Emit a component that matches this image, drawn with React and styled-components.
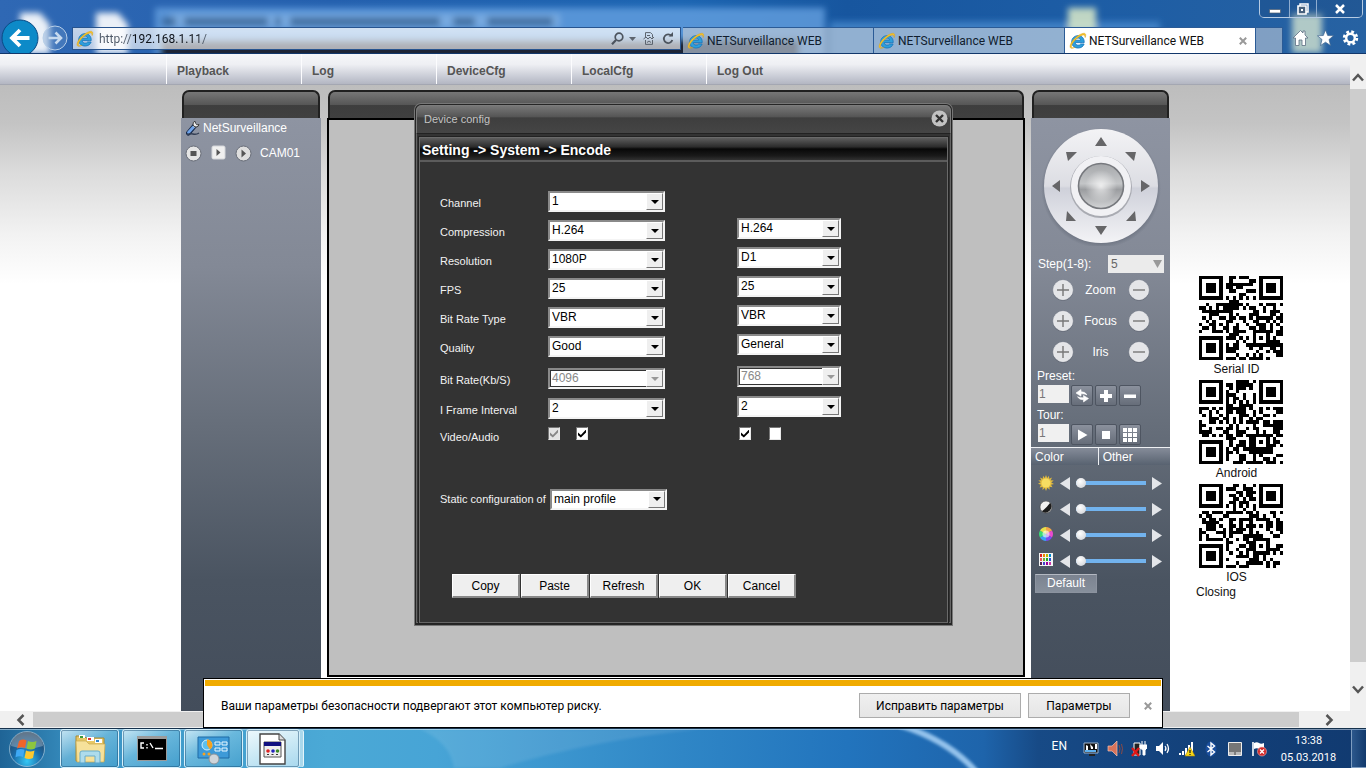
import React, { useState } from "react";
import styled, { createGlobalStyle, css } from "styled-components";

const GlobalStyle = createGlobalStyle`
  * { box-sizing: border-box; }
  html, body { margin: 0; height: 100%; overflow: hidden; }
  body { font-family: "Liberation Sans", Arial, sans-serif; font-size: 12px; background: #fff; }
  #root { height: 100%; }
  button, input, select { font-family: inherit; margin: 0; }
  svg { display: block; flex: none; }
`;

const UI_FONT = 'Roboto, "Open Sans", sans-serif';

const Screen = styled.div`
  position: relative;
  height: 100vh;
  display: flex;
  flex-direction: column;
`;

/* ---------- browser frame ---------- */

const Chrome = styled.header`
  position: relative;
  height: 54px;
  flex: none;
  overflow: hidden;
  background: linear-gradient(90deg, #2f68b4 0, #2460ae 24%, #1c65b2 50%, #17569f 62%, #1d5da5 80%, #2762a2 100%);
  border-bottom: 1px solid #12376b;
  font-family: ${UI_FONT};
`;

const Glass = styled.svg`
  position: absolute;
  inset: 0;
  width: 100%;
  height: 100%;
`;

const Caption = styled.div`
  position: absolute;
  top: 0;
  right: 3px;
  display: flex;
  height: 18px;
  border: 1px solid #b6cbe3;
  border-top: 0;
  border-radius: 0 0 5px 5px;
`;

const CaptionButton = styled.button`
  width: ${(p) => p.$w}px;
  padding: 0;
  display: grid;
  place-items: center;
  border: 0;
  border-left: ${(p) => (p.$first ? "0" : "1px solid #8fadd0")};
  background: rgba(20, 60, 110, 0.25);
`;

const ChromeRow = styled.div`
  position: relative;
  display: flex;
  align-items: flex-start;
  padding-top: 19px;
  height: 54px;
`;

const NavRound = styled.button`
  width: ${(p) => p.$size}px;
  height: ${(p) => p.$size}px;
  flex: none;
  padding: 0;
  border: 0;
  background: none;
  margin: ${(p) => p.$m};
`;

const AddressBar = styled.div`
  flex: 1;
  height: 23px;
  margin: 8px 2px 0 4px;
  padding: 0 6px 0 3px;
  display: flex;
  align-items: center;
  gap: 5px;
  border: 1px solid #27548f;
  background: linear-gradient(180deg, rgba(255, 255, 255, 0.72), rgba(255, 255, 255, 0.64));
  min-width: 0;
`;

const AddressInput = styled.input`
  flex: 1;
  min-width: 0;
  height: 20px;
  border: 0;
  padding: 0;
  outline: 0;
  font-size: 12px;
  color: transparent;
  background: linear-gradient(90deg, #4f5a68 34px, #0c1118 34px, #0c1118 100px, #4f5a68 100px);
  background-clip: text;
`;

const ToolButton = styled.button`
  padding: 0;
  border: 0;
  background: none;
`;

const Tabs = styled.div`
  display: flex;
  height: 26px;
  margin-top: 8px;
`;

const Tab = styled.button`
  width: 191px;
  height: 26px;
  padding: 0 8px 0 4px;
  display: flex;
  align-items: center;
  gap: 2px;
  border: 1px solid #2b5b96;
  border-width: 1px 1px 0 0;
  background: ${(p) => (p.$active ? "#fff" : "rgba(190, 202, 216, 0.66)")};
  color: ${(p) => (p.$active ? "#101010" : "#101d2e")};
  font-family: inherit;
  font-size: 12px;
  text-align: left;
  white-space: nowrap;
`;

const TabTitle = styled.span`
  flex: 1;
`;

const NewTab = styled.button`
  width: 27px;
  height: 26px;
  border: 1px solid #2b5b96;
  border-width: 1px 1px 0 0;
  background: rgba(190, 202, 216, 0.6);
`;

const ChromeTools = styled.div`
  display: flex;
  gap: 8px;
  margin: 10px 7px 0 9px;
`;

const Viewport = styled.div`
  flex: 1;
  min-height: 0;
  display: grid;
  grid-template-columns: minmax(0, 1fr) 16px;
  grid-template-rows: minmax(0, 1fr) 17px;
`;

const ScrollTrack = styled.div`
  display: flex;
  flex-direction: ${(p) => (p.$vertical ? "column" : "row")};
  align-items: center;
  background: #f0f0f0;
  ${(p) =>
    p.$vertical
      ? css`
          grid-row: 1;
          grid-column: 2;
          padding: 18px 0 16px;
          justify-content: space-between;
        `
      : css`
          grid-row: 2;
          grid-column: 1 / 3;
          padding: 0 31px 0 15px;
          gap: 6px;
        `}
`;

const ScrollThumb = styled.div`
  flex: 1;
  background: #cdcdcd;
  ${(p) => (p.$vertical ? "width: 16px; margin: 6px 0 22px;" : "height: 15px; margin-right: 18px;")}
`;

const ScrollButton = styled.button`
  padding: 0;
  border: 0;
  background: none;
`;

/* ---------- web page ---------- */

const Page = styled.div`
  min-width: 0;
  display: flex;
  flex-direction: column;
  background: linear-gradient(180deg, #bdbdbd 30px, #c4c4c4 70px, #dcdcdc 120px, #f2f2f2 180px, #ffffff 230px);
`;

const MenuBar = styled.nav`
  height: 31px;
  flex: none;
  display: flex;
  padding-left: 166px;
  background: linear-gradient(180deg, #f6f7fa 0, #eeeff3 35%, #c9ccd6 75%, #b3b6c2 100%);
  border-bottom: 1px solid #a4a7b2;
`;

const MenuItem = styled.a`
  width: 135px;
  padding-left: 10px;
  line-height: 34px;
  height: 30px;
  border-left: 1px solid #fcfcfe;
  color: #555;
  font-weight: bold;
  text-decoration: none;
`;

const Columns = styled.main`
  flex: 1;
  min-height: 0;
  display: flex;
  gap: 6px;
  padding: 5px 0 0 181px;
`;

const Column = styled.section`
  position: relative;
  display: flex;
  flex-direction: column;
  ${(p) => (p.$w ? `width: ${p.$w}px; flex: none;` : "flex: 1; min-width: 0;")}
`;

const PanelCap = styled.div`
  height: 28px;
  flex: none;
  margin: 0 1px;
  border: 2px solid #202020;
  border-bottom: 0;
  border-radius: 7px 7px 0 0;
  background: linear-gradient(180deg, #777 0, #555 50%, #3d3d3d 52%, #404040 100%);
`;

const PanelBody = styled.div`
  flex: 1;
  min-height: 0;
  background: linear-gradient(180deg, #8e94a2 0, #838996 25%, #666e7a 52%, #4a5461 78%, #434d5b 100%);
  color: #fff;
`;

const VideoArea = styled.div`
  flex: 1;
  margin-bottom: 34px;
  background: #bfbfbf;
  border: 2px solid #000;
`;

const TreeRow = styled.div`
  display: flex;
  align-items: center;
  height: ${(p) => p.$h}px;
  padding-left: ${(p) => p.$left}px;
  gap: ${(p) => p.$gap}px;
`;

const IconButton = styled.button`
  padding: 0;
  border: 0;
  background: none;
`;

const DeviceName = styled.span`
  white-space: nowrap;
`;

/* ---------- PTZ panel ---------- */

const WheelBox = styled.div`
  display: flex;
  justify-content: center;
  padding-top: 8px;
`;

const StepRow = styled.div`
  display: flex;
  align-items: center;
  justify-content: space-between;
  height: 20px;
  margin-top: 8px;
  padding: 0 6px 0 7px;
`;

const StackSelect = styled.span`
  display: grid;
  align-items: center;
  > * { grid-area: 1 / 1; }
  > svg { justify-self: end; margin-right: 2px; pointer-events: none; }
`;

const StepSelect = styled.select`
  appearance: none;
  width: 56px;
  height: 18px;
  border: 0;
  border-radius: 0;
  padding: 0 3px;
  background: #ebebeb;
  color: #666;
  font-size: 12px;
`;

const LensRow = styled.div`
  display: grid;
  grid-template-columns: 22px 54px 22px;
  justify-content: center;
  align-items: center;
  text-align: center;
  height: 31px;
`;

const FieldLabel = styled.label`
  display: block;
  line-height: 18px;
  padding-left: 6px;
`;

const FieldRow = styled.div`
  display: flex;
  align-items: flex-start;
  gap: 2px;
  height: 21px;
  padding-left: 7px;
`;

const NumberBox = styled.input`
  width: 31px;
  height: 18px;
  padding: 0 1px;
  border: 0;
  background: #f0f0f0;
  color: #777;
  font-size: 12px;
`;

const SquareButton = styled.button`
  width: 22px;
  height: 21px;
  padding: 0;
  display: grid;
  place-items: center;
  border: 1px solid #4e5561;
  border-radius: 2px;
  background: linear-gradient(180deg, #8b919d, #666d79);
`;

const PictureTabs = styled.div`
  display: flex;
  margin-top: 2px;
  height: 18px;
`;

const PictureTab = styled.button`
  flex: ${(p) => p.$grow};
  padding: 0 0 0 4px;
  border: 0;
  border-top: 1px solid #eef0f3;
  border-left: ${(p) => (p.$divided ? "1px solid #eef0f3" : "0")};
  background: linear-gradient(180deg, #858c99, #586270);
  color: #fff;
  font-size: 12px;
  text-align: left;
`;

const Sliders = styled.div`
  padding: 5px 7px 0 7px;
`;

const SliderRow = styled.div`
  height: 26px;
  display: grid;
  grid-template-columns: 16px 10px 70px 10px;
  column-gap: 6px;
  align-items: center;
`;

const Range = styled.input`
  appearance: none;
  width: 70px;
  height: 12px;
  background: transparent;
  &::-webkit-slider-runnable-track { height: 4px; background: #72b3ee; }
  &::-webkit-slider-thumb {
    appearance: none;
    width: 10px;
    height: 10px;
    margin-top: -3px;
    border-radius: 50%;
    background: radial-gradient(circle at 40% 35%, #fff, #c9ccd2);
  }
`;

const DefaultButton = styled.button`
  width: 62px;
  height: 19px;
  margin-left: 4px;
  padding: 0;
  border: 1px solid #8c939f;
  border-top-color: #b4b9c2;
  background: linear-gradient(180deg, #7b8390, #87909c);
  color: #fff;
  font-size: 12px;
  line-height: 15px;
`;

const QrColumn = styled.aside`
  width: 154px;
  flex: none;
  margin-left: 20px;
  padding-top: 186px;
  color: #111;
`;

const QrFigure = styled.figure`
  width: 88px;
  margin: 0 0 2px;
  padding-left: 3px;
  &:last-of-type { margin-bottom: 0; }
`;

const QrCaption = styled.figcaption`
  width: 75px;
  text-align: center;
  line-height: 19px;
  height: 18px;
`;

const Closing = styled.p`
  margin: 0;
  line-height: 12px;
`;

/* ---------- device config dialog ---------- */

const Dialog = styled.section`
  position: absolute;
  top: 14px;
  left: 88px;
  right: 73px;
  background: #333;
  border: 2px solid #262626;
  border-width: 1px 1px 2px 1px;
  border-radius: 6px 6px 0 0;
  box-shadow: inset 0 0 0 1px #666, 0 0 0 1px #777;
  font-size: 11px;
  color: #f2f2f2;
`;

const DialogHeader = styled.div`
  height: 29px;
  padding: 0 2px 2px 7px;
  display: flex;
  align-items: center;
  justify-content: space-between;
  border-radius: 6px 6px 0 0;
  border: 1px solid #7c7c7c;
  border-bottom-color: #222;
  background: linear-gradient(180deg, #777 0, #555 40%, #3e3e3e 44%, #454545 100%);
  color: #c4c4c4;
`;

const DialogFrame = styled.div`
  margin: 3px 3px 0;
  border: 1px solid #6a6a6a;
  border-bottom: 0;
  outline: 1px solid #222;
  padding-bottom: 25px;
`;

const Breadcrumb = styled.h1`
  margin: 0;
  height: 24px;
  padding-left: 2px;
  font-size: 14px;
  line-height: 24px;
  font-weight: bold;
  color: #fff;
  background: linear-gradient(180deg, #5d5d5d 0, #2c2c2c 40%, #080808 50%, #191919 80%, #303030 100%);
  border-bottom: 2px solid #5c5c5c;
`;

const FormGrid = styled.div`
  display: grid;
  grid-template-columns: 108px 189px 105px;
  grid-template-rows: repeat(5, 29px) 32px 30px 27px 29px;
  padding: 27px 0 0 20px;
`;

const FormLabel = styled.label`
  padding-top: 7px;
  line-height: 15px;
  white-space: nowrap;
`;

const Cell = styled.div`
  padding-top: ${(p) => (p.$main ? 2 : 0)}px;
`;

const Combo = styled.span`
  display: grid;
  width: ${(p) => p.$w}px;
  height: 21px;
  border: 2px solid;
  border-color: #8a8a8a #f4f4f4 #f4f4f4 #8a8a8a;
  > * { grid-area: 1 / 1; }
`;

const ComboSelect = styled.select`
  appearance: none;
  width: 100%;
  height: 17px;
  padding: 0 0 0 1px;
  border: 1px solid ${(p) => (p.disabled ? "#333" : "#fff")};
  border-radius: 0;
  background: #fff;
  color: #000;
  font-size: 12px;
  line-height: 15px;
  opacity: 1;
  &:disabled { color: #888; }
`;

const ComboArrow = styled.span`
  justify-self: end;
  width: 17px;
  height: 17px;
  display: grid;
  place-items: center;
  pointer-events: none;
  background: #efefef;
  border: 1px solid;
  border-color: #fff #777 #777 #fff;
`;

const Checks = styled.div`
  display: flex;
  gap: ${(p) => p.$gap}px;
  padding: 4px 0 0 ${(p) => p.$left || 0}px;
`;

const Check = styled.input`
  appearance: none;
  width: 12px;
  height: 13px;
  display: grid;
  place-items: center;
  background: ${(p) => (p.disabled ? "#e4e4e4" : "#fff")};
  border: 1px solid;
  border-color: #777 #e8e8e8 #e8e8e8 #777;
  &:checked::before {
    content: "";
    width: 8px;
    height: 8px;
    background: ${(p) => (p.disabled ? "#888" : "#000")};
    clip-path: polygon(0 38%, 36% 68%, 100% 0, 100% 36%, 36% 100%, 0 72%);
  }
`;

const ProfileRow = styled.div`
  display: flex;
  align-items: center;
  justify-content: flex-start;
  padding: 36px 0 0 20px;
  height: 58px;
`;

const ProfileLabel = styled.label`
  width: 110px;
  white-space: nowrap;
`;

const Actions = styled.div`
  display: flex;
  gap: 1px;
  padding: 64px 0 0 32px;
`;

const Action = styled.button`
  width: 68px;
  height: 24px;
  padding: 0;
  border: 1px solid;
  border-color: #fff #888 #888 #fff;
  border-right-width: 2px;
  border-bottom-width: 2px;
  background: #efefef;
  color: #000;
  font-size: 12px;
`;

/* ---------- security notice ---------- */

const Notice = styled.div`
  position: absolute;
  left: 203px;
  right: 203px;
  bottom: 40px;
  height: 50px;
  padding: 1px 1px 0;
  border: 1px solid #000;
  background: #fff;
  font-family: ${UI_FONT};
  color: #000;
`;

const NoticeStripe = styled.div`
  height: 6px;
  background: #f0ab00;
`;

const NoticeBody = styled.div`
  display: flex;
  align-items: center;
  height: 39px;
  padding: 0 2px 0 16px;
  gap: 7px;
`;

const NoticeText = styled.p`
  flex: 1;
  margin: 0;
  font-size: 12px;
`;

const NoticeButton = styled.button`
  width: ${(p) => p.$w}px;
  height: 25px;
  padding: 0;
  border: 1px solid #acacac;
  background: linear-gradient(180deg, #f0f0f0, #e5e5e5);
  color: #000;
  font-size: 12px;
`;

const NoticeClose = styled.button`
  width: 22px;
  padding: 0;
  border: 0;
  background: none;
  display: grid;
  place-items: center;
`;

/* ---------- taskbar ---------- */

const Taskbar = styled.footer`
  position: relative;
  height: 40px;
  flex: none;
  display: flex;
  overflow: hidden;
  border-top: 1px solid #16324d;
  background: linear-gradient(90deg, #1f6496 0, #3a93c4 6%, #4ba9d6 24%, #47a4d6 32%, #2f86c6 50%, #2274bd 62%, #1e64ab 72%, #174a86 76%, #123f78 90%, #113a70 100%);
  box-shadow: inset 0 1px 0 rgba(255, 255, 255, 0.45);
  font-family: ${UI_FONT};
`;

const StartButton = styled.button`
  width: 60px;
  padding: 0 0 0 7px;
  border: 0;
  background: none;
`;

const TaskButtons = styled.div`
  position: relative;
  display: flex;
  gap: 3px;
  flex: 1;
  height: 39px;
`;

const TaskButton = styled.button`
  width: ${(p) => p.$w || 59}px;
  padding: 0;
  display: grid;
  place-items: center;
  border: 1px solid #d6f0fb;
  border-radius: 3px;
  outline: 1px solid rgba(20, 70, 110, 0.45);
  outline-offset: -2px;
  box-shadow: ${(p) => (p.$active ? "4px 0 0 -1px #a9d8ec, 5px 0 0 -1px #e4f5fb" : "none")};
  background: ${(p) =>
    p.$active
      ? "linear-gradient(160deg, #eef9fd, #cbe9f5 50%, #a8d8ee)"
      : "linear-gradient(150deg, rgba(222,244,252,0.85), rgba(130,200,230,0.6) 45%, rgba(70,160,205,0.7))"};
`;

const Tray = styled.div`
  position: relative;
  display: flex;
  align-items: center;
  gap: 8px;
  color: #fff;
  font-size: 12px;
`;

const Lang = styled.span`
  margin: -6px 8px 0 0;
`;

const Clock = styled.div`
  width: 68px;
  padding-right: 1px;
  text-align: center;
  font-size: 11px;
  line-height: 17px;
`;

const ShowDesktop = styled.button`
  width: 15px;
  height: 39px;
  padding: 0;
  border: 1px solid #7d9cc0;
  border-right: 0;
  background: linear-gradient(90deg, #2b578c, #123a6d);
`;

/* ---------- drawings ---------- */

const IeLogo = ({ size = 18 }) => (
  <svg width={size} height={size} viewBox="0 0 18 18">
    <path d="M13.2 10.6H6.2c.2 1.700 1.400 2.600 2.900 2.600 1.200 0 2-.4 2.500-1.200h3.500c-.8 2.500-3 4-6 4C5.300 16 2.700 13.600 2.700 9.900S5.400 3.700 9.100 3.700c4 0 6.200 2.700 6.100 6.900zM6.300 8.200h5.300c-.2-1.400-1.200-2.200-2.600-2.200S6.500 6.800 6.300 8.200z" fill="#2d9fdc" stroke="#1c78bd" strokeWidth=".9" />
    <path d="M16.200 5.600c.9-2.200.7-3.800-.4-4.200-1.600-.6-5 .7-8.200 3.300C3.100 8.300.3 13 1.200 15.400c.6 1.500 2.700 1.100 5-.2-1.900.7-3.200.8-3.600 0-.8-1.600 1.600-5.600 5.300-8.700 3.200-2.700 6.300-4.100 7.300-3.400.5.400.6 1.300 1 2.500z" fill="#f5c22c" stroke="#d79c10" strokeWidth=".4" />
  </svg>
);

const BackIcon = () => (
  <svg width="38" height="38" viewBox="0 0 38 38">
    <circle cx="19" cy="19" r="18" fill="#0d8ac8" stroke="#0a4b86" />
    <path d="M28.500 19H12M19 11l-8 8 8 8" fill="none" stroke="#fff" strokeWidth="3.800" />
  </svg>
);

const ForwardIcon = () => (
  <svg width="26" height="26" viewBox="0 0 26 26">
    <circle cx="13" cy="13" r="12" fill="#6e98cc" fillOpacity=".35" stroke="#b8cfe8" />
    <path d="M6.500 13h12M13.500 7.500 19 13l-5.500 5.500" fill="none" stroke="#c6d9ee" strokeWidth="2.600" />
  </svg>
);

const Cross = ({ size = 8, color = "#999", width = 2 }) => (
  <svg width={size} height={size} viewBox="0 0 8 8">
    <path d="M.8.8l6.400 6.400M7.200.8.8 7.200" stroke={color} strokeWidth={width} />
  </svg>
);

const Triangle = ({ dir = "down", w = 8, h = 5, color = "#000" }) => {
  const d = { down: "M0 0h10L5 10z", left: "M10 0v10L0 5z", right: "M0 0v10l10-5z" }[dir];
  return (
    <svg width={w} height={h} viewBox="0 0 10 10" preserveAspectRatio="none">
      <path d={d} fill={color} />
    </svg>
  );
};

const Chevron = ({ d, w, h }) => (
  <svg width={w} height={h} viewBox={`0 0 ${w} ${h}`}>
    <path d={d} fill="none" stroke="#555" strokeWidth="2.500" />
  </svg>
);

const RoundSign = ({ plus }) => (
  <svg width="22" height="22" viewBox="0 0 22 22">
    <circle cx="11" cy="12" r="10" fill="#4f5662" opacity=".5" />
    <circle cx="11" cy="11" r="9.700" fill="#e4e5e8" stroke="#f5f5f7" strokeWidth=".6" />
    <path d={plus ? "M5 11h12M11 5v12" : "M5 11h12"} stroke="#777" strokeWidth="1.400" />
  </svg>
);

const Wheel = () => (
  <svg width="120" height="120" viewBox="0 0 120 120" role="img" aria-label="Pan and tilt">
    <defs>
      <linearGradient id="ring" x1="0" y1="0" x2="0" y2="1">
        <stop offset="0" stopColor="#f3f3f5" />
        <stop offset=".5" stopColor="#dcdde3" />
        <stop offset=".52" stopColor="#cfd1da" />
        <stop offset="1" stopColor="#f3f3f6" />
      </linearGradient>
      <linearGradient id="knob" x1="0" y1="0" x2="0" y2="1">
        <stop offset="0" stopColor="#a6a8ab" />
        <stop offset=".45" stopColor="#c3c5c7" />
        <stop offset=".58" stopColor="#9b9da0" />
        <stop offset="1" stopColor="#d3d4d6" />
      </linearGradient>
      <radialGradient id="shine">
        <stop offset="0" stopColor="#fff" stopOpacity=".75" />
        <stop offset="1" stopColor="#fff" stopOpacity="0" />
      </radialGradient>
      <radialGradient id="halo">
        <stop offset=".9" stopColor="#5b6270" stopOpacity=".6" />
        <stop offset="1" stopColor="#5b6270" stopOpacity="0" />
      </radialGradient>
    </defs>
    <circle cx="60" cy="62" r="60" fill="url(#halo)" />
    <circle cx="60" cy="60" r="57" fill="url(#ring)" />
    <circle cx="60" cy="61" r="31" fill="#a9abb2" />
    <circle cx="60" cy="60" r="30" fill="#f1f1f4" />
    <circle cx="60" cy="60" r="22.500" fill="url(#knob)" stroke="#77797e" strokeWidth="1.600" />
    <circle cx="60" cy="60" r="16" fill="url(#shine)" />
    <g fill="#666668">
      <path d="M60 11l6 9H54zM60 109l6-9H54zM11 60l8-6v12zM109 60l-9-6v12z" />
      <path d="M25 26l11 0-9 9zM95 26l-11 0 9 9zM25 95l1-10 9 10zM95 95l-10 0 9-10z" />
    </g>
  </svg>
);

const Wrench = () => (
  <svg width="14" height="16" viewBox="0 0 14 16">
    <path d="M2.500 13 8 6.500" stroke="#17294a" strokeWidth="5" strokeLinecap="round" />
    <path d="M2.500 12.500 7.500 7" stroke="#6ea3ea" strokeWidth="2.800" strokeLinecap="round" />
    <path d="M8 7 10.500 4" stroke="#ddd" strokeWidth="2.500" />
    <path d="M9 1.200A3 3 0 1 0 13 4.500l-2 .3-1.300-1.300z" fill="#eee" stroke="#333" strokeWidth=".9" />
    <path d="M1 15q3-2 6-1t6-1" fill="none" stroke="#333f55" strokeWidth="1.500" />
  </svg>
);

const CamStop = () => (
  <svg width="17" height="17" viewBox="0 0 17 17">
    <circle cx="8.500" cy="8.500" r="7.500" fill="#e5e5e5" stroke="#686d78" />
    <rect x="5.500" y="6" width="6" height="5" fill="#555" />
  </svg>
);
const CamPlaySquare = () => (
  <svg width="17" height="17" viewBox="0 0 17 17">
    <rect x="2" y="1" width="13" height="13" rx="1.500" fill="#f0f0f0" stroke="#d4d6da" />
    <path d="M6.500 4v7l4-3.500z" fill="#555" />
  </svg>
);
const CamPlayRound = () => (
  <svg width="17" height="17" viewBox="0 0 17 17">
    <circle cx="8.500" cy="8.500" r="7.500" fill="#dedede" stroke="#686d78" />
    <path d="M6.500 4.500v8l4.500-4z" fill="#555" />
  </svg>
);

const Glyphs = {
  swap: <path d="M2 4l5-3.500v2.300q4-.3 6 3-3-1.300-6-1v2.400zM14.500 9.500l-5 3.500v-2.200q-4 .2-6-3 3 1.200 6 1V6.500z" fill="#fff" stroke="#fff" strokeWidth=".6" />,
  plus: <path d="M6 1h4v4h4v4h-4v4H6V9H2V5h4z" fill="#fff" />,
  minus: <path d="M2 5.500h12v3.500H2z" fill="#fff" />,
  play: <path d="M4 1.500v11L13.500 7z" fill="#fff" />,
  stop: <path d="M4 3h8v8H4z" fill="#fff" />,
  grid: <path d="M1 0h4v4H1zM6 0h4v4H6zM11 0h4v4h-4zM1 5h4v4H1zM6 5h4v4H6zM11 5h4v4h-4zM1 10h4v4H1zM6 10h4v4H6zM11 10h4v4h-4z" fill="#fff" />,
};
const Glyph = ({ name }) => (
  <svg width="16" height="14" viewBox="0 0 16 14">{Glyphs[name]}</svg>
);

const SliderIcons = {
  Brightness: (
    <svg width="16" height="16" viewBox="0 0 16 16">
      <path d="M8 0l1.200 3L11 .8l.2 3L14 2.500l-1.300 2.700 3 .2L13.300 7.500 16 9l-3 .7 1.500 2.600-3-.5.200 3-2.300-2L8 16l-1.200-3-2.300 2 .2-3-3 .5L3 9.800 0 8.800l2.700-1.500L.3 5.400l3-.2L2 2.500l2.800 1.300.2-3L6.800 3z" fill="#e0ba3f" />
      <circle cx="8" cy="8" r="4.500" fill="#f7dd62" />
    </svg>
  ),
  Contrast: (
    <svg width="16" height="16" viewBox="0 0 16 16">
      <circle cx="8" cy="6" r="6" fill="#f2f2f2" stroke="#444" strokeWidth=".6" />
      <path d="M12.200 1.800A6 6 0 0 1 3.800 10.200Q8 7.500 12.200 1.800z" fill="#1c1c1c" />
    </svg>
  ),
  Saturation: (
    <svg width="16" height="16" viewBox="0 0 16 16">
      <g transform="translate(0 -1)">
        <path d="M8 8V1a7 7 0 0 1 6 3.500z" fill="#f3a54a" />
        <path d="M8 8l6-3.500a7 7 0 0 1 0 7z" fill="#e94bd0" />
        <path d="M8 8l6 3.500A7 7 0 0 1 8 15z" fill="#7a4cf0" />
        <path d="M8 8v7a7 7 0 0 1-6-3.500z" fill="#3aa0f5" />
        <path d="M8 8l-6 3.500a7 7 0 0 1 0-7z" fill="#39dc75" />
        <path d="M8 8L2 4.500A7 7 0 0 1 8 1z" fill="#e8e04a" />
        <circle cx="8" cy="8" r="3.500" fill="#fff" opacity=".6" />
      </g>
    </svg>
  ),
  Hue: (
    <svg width="16" height="16" viewBox="0 0 16 16">
      <path d="M1 0h14v13H1z" fill="#f4f4f4" />
      {["#d22", "#e80", "#bb0", "#08c", "#e55", "#7a3", "#2a2", "#25c", "#525", "#44c", "#909", "#c3a"].map((c, i) => (
        <rect key={c} x={2 + (i % 4) * 3} y={1 + Math.floor(i / 4) * 4} width="2" height="3" fill={c} />
      ))}
    </svg>
  ),
};

const qrPath = (seed) => {
  const n = 25;
  let s = seed;
  const rand = () => {
    s = (s * 1103515245 + 12345) % 2147483648;
    return s / 2147483648;
  };
  const finder = (x, y, ox, oy, size) => {
    const dx = x - ox;
    const dy = y - oy;
    const half = (size - 1) / 2;
    const r = Math.max(Math.abs(dx - half), Math.abs(dy - half));
    if (r > half + (size === 7 ? 1 : 0)) return null;
    return size === 7 ? r === 3 || r <= 1 : r !== 1;
  };
  let d = "";
  for (let y = 0; y < n; y += 1) {
    for (let x = 0; x < n; x += 1) {
      const noise = rand() > 0.5;
      const marks = [finder(x, y, 0, 0, 7), finder(x, y, 18, 0, 7), finder(x, y, 0, 18, 7), finder(x, y, 16, 16, 5)];
      const mark = marks.find((m) => m !== null);
      const timing = x === 6 || y === 6 ? (x + y) % 2 === 0 : noise;
      if (mark === undefined ? timing : mark) d += `M${x} ${y}h1v1h-1z`;
    }
  }
  return d;
};

const QrCode = ({ seed, label }) => (
  <svg width="84" height="84" viewBox="0 0 25 25" shapeRendering="crispEdges" role="img" aria-label={label}>
    <path d={qrPath(seed)} fill="#000" />
  </svg>
);

const StartOrb = () => (
  <svg width="40" height="38" viewBox="0 0 40 38">
    <defs>
      <radialGradient id="orb" cx=".5" cy=".85" r=".8">
        <stop offset="0" stopColor="#35c8f5" />
        <stop offset=".5" stopColor="#1a6ba8" />
        <stop offset="1" stopColor="#26435f" />
      </radialGradient>
    </defs>
    <circle cx="20" cy="19" r="17.500" fill="url(#orb)" stroke="#a9cbe0" strokeOpacity=".7" />
    <path d="M4 16a16 14 0 0 1 32 0q-16 5-32 0z" fill="#fff" opacity=".28" />
    <path d="M12 11q4-2.500 7.500-.5L18 18q-4-1.500-8 .5z" fill="#f0652a" />
    <path d="M21 11q4 2 8.500 0L28 18.500q-4 2-8.500 0z" fill="#8cc63f" />
    <path d="M9.500 20q4-2 8-.3L16 27q-3.500-1.500-7.500.3z" fill="#3fa9f5" />
    <path d="M19 20.500q4 2 8.500 0L26 28q-4 2-8.500 0z" fill="#fdc82f" />
  </svg>
);

const ExplorerIcon = () => (
  <svg width="34" height="32" viewBox="0 0 34 32">
    <path d="M3 3h8l2 2h18v23H3z" fill="#e7c765" stroke="#a98a35" />
    <path d="M6 2h6v3H6z" fill="#fff" /><path d="M7 3h3v2H7z" fill="#3a9c3a" />
    <path d="M14 4h7v4h-7z" fill="#fff" /><path d="M15 5h3v2h-3z" fill="#d33" />
    <path d="M22 6h7v4h-7z" fill="#fff" /><path d="M23 7h3v2h-3z" fill="#38c" />
    <path d="M3 8h10l3 3h16l-1 18H4z" fill="#f6e19a" stroke="#c9a94f" strokeWidth=".7" />
    <path d="M7 30V20q0-2 2-2h16q2 0 2 2v10h-5v-7H12v7z" fill="#a7dcf5" stroke="#5aa7d0" opacity=".9" />
  </svg>
);
const ConsoleIcon = () => (
  <svg width="30" height="25" viewBox="0 0 30 25">
    <path d="M0 0h30v25H0z" fill="#9a9a9a" /><path d="M1 3h28v21H1z" fill="#000" />
    <path d="M7 7H4v5h3M10 8v1.500M10 11v1.500M13 7l3 5M18 12.500h8" stroke="#fff" fill="none" strokeWidth="1.400" />
  </svg>
);
const PanelIcon = () => (
  <svg width="34" height="32" viewBox="0 0 34 32">
    <path d="M1 4h31v21H1z" fill="#3d9ad8" stroke="#1e6aa5" />
    <circle cx="10" cy="12" r="5" fill="#5cc0ee" stroke="#d6f0fc" /><path d="M10 12V6.500a5.500 5.500 0 0 1 3 10z" fill="#f5a21f" />
    <path d="M18 9h5v3h-5zM25 9h5v3h-5zM18 15h5v3h-5zM25 15h5v3h-5z" fill="none" stroke="#e8f7ff" />
    <circle cx="7" cy="21" r="1.500" fill="#f5a21f" /><circle cx="12" cy="21" r="1.500" fill="#f5a21f" />
    <circle cx="17" cy="26" r="5" fill="#cfd5da" stroke="#8b9399" />
  </svg>
);
const PageIcon = () => (
  <svg width="28" height="32" viewBox="0 0 28 32">
    <path d="M1 1h19l6 6v24H1z" fill="#fff" stroke="#444" strokeWidth="1.400" /><path d="M20 1v6h6" fill="#ddd" stroke="#444" />
    <path d="M5 9h17v15H5z" fill="#eee" stroke="#555" /><path d="M5 9h17v4H5z" fill="#101080" />
    <circle cx="9" cy="18" r="1.800" fill="#d22" /><circle cx="14" cy="18" r="1.800" fill="#22b" /><circle cx="18.500" cy="18" r="1.800" fill="#3a8a2a" />
    <path d="M8 21.500h2M12.500 21.500h2M17 21.500h2" stroke="#333" />
  </svg>
);

const trayIcons = [
  ["Monitor", <><path d="M1 2h14v10H1z" fill="#111" stroke="#9fb2c8" /><path d="M3 4l2 1v4H3zM7 3l3 3v2H8zM12 3h2v5h-2z" fill="#fff" /><path d="M2 9h11v2H2z" fill="#5fb0ee" /><path d="M6 13h6v2H6z" fill="#222" /></>],
  ["Audio device", <><path d="M1 5h4l5-5v15l-5-5H1z" fill="#d8735a" stroke="#f2c0b2" strokeWidth=".7" /><path d="M12 4q2 3.500 0 8M14.500 3q2 4.500 0 10" fill="none" stroke="#8a4a46" /></>],
  ["Power", <><path d="M3 2h6v12H3z" fill="#222" stroke="#fff" /><path d="M11 0v4M14 0v4M9 4h7v3l-2 2v5h-2V9l-3-2z" fill="#fff" stroke="#fff" /><path d="M1 7l7 8M8 7l-7 8" stroke="#e01818" strokeWidth="2.400" /></>],
  ["Volume", <><path d="M1 5h3l4-4v13l-4-4H1z" fill="#fff" /><path d="M10 5q2 2.500 0 5M12 3q3 4.500 0 9" fill="none" stroke="#fff" strokeWidth="1.200" /></>],
  ["Network", <><path d="M0 12h2v2H0zM3 10h2v4H3zM6 7h2v7H6zM9 4h2v10H9zM12 1h2v13h-2z" fill="#fff" /><path d="M11 6l5 9H6z" fill="#f7d715" stroke="#b08a00" strokeWidth=".6" /><path d="M11 9v3M11 13v1" stroke="#222" strokeWidth="1.300" /></>],
  ["Bluetooth", <><ellipse cx="8" cy="8" rx="5.500" ry="7.500" fill="#1a4e9c" /><path d="M4.500 5l7 6L8 14V2l3.500 3-7 6" fill="none" stroke="#fff" strokeWidth="1.400" /></>],
  ["Touchpad", <><path d="M1.500 1.500h13v13h-13z" fill="#777" stroke="#eee" /><path d="M2 11h12v3H2z" fill="#bbb" /><path d="M8 11v3" stroke="#444" /></>],
  ["Action Center", <><path d="M2 1v14" stroke="#fff" strokeWidth="1.600" /><path d="M3 2q3-1.500 5 0t5 0v6q-3 1.500-5 0T3 8z" fill="#fff" /><circle cx="11" cy="10.500" r="4.500" fill="#d32b2b" stroke="#f4b5b5" strokeWidth=".6" /><path d="M9 8.500l4 4M13 8.500l-4 4" stroke="#fff" strokeWidth="1.300" /></>],
];

/* ---------- parts ---------- */

const Dropdown = ({ id, width, value, disabled, label }) => (
  <Combo $w={width}>
    <ComboSelect id={id} aria-label={label} disabled={disabled} defaultValue={value}>
      <option>{value}</option>
    </ComboSelect>
    <ComboArrow>
      <Triangle w={8} h={4} color={disabled ? "#999" : "#000"} />
    </ComboArrow>
  </Combo>
);

const encodeRows = [
  ["Channel", "1", null],
  ["Compression", "H.264", "H.264"],
  ["Resolution", "1080P", "D1"],
  ["FPS", "25", "25"],
  ["Bit Rate Type", "VBR", "VBR"],
  ["Quality", "Good", "General"],
  ["Bit Rate(Kb/S)", "4096", "768"],
  ["I Frame Interval", "2", "2"],
];

const DeviceConfig = () => (
  <Dialog role="dialog" aria-label="Device config">
    <DialogHeader>
      <span>Device config</span>
      <IconButton aria-label="Close">
        <svg width="17" height="17" viewBox="0 0 17 17">
          <circle cx="8.500" cy="8.500" r="8" fill="#c2c2c2" />
          <path d="M5 5l7 7M12 5l-7 7" stroke="#333" strokeWidth="2.400" />
        </svg>
      </IconButton>
    </DialogHeader>
    <DialogFrame>
      <Breadcrumb>{"Setting -> System -> Encode"}</Breadcrumb>
      <FormGrid>
        {encodeRows.map(([name, main, extra]) => {
          const id = "main-" + name.replace(/\W/g, "");
          const off = name === "Bit Rate(Kb/S)";
          return (
            <React.Fragment key={name}>
              <FormLabel htmlFor={id}>{name}</FormLabel>
              <Cell $main>
                <Dropdown id={id} width={117} value={main} disabled={off} />
              </Cell>
              <Cell>{extra && <Dropdown label={name + ", extra stream"} width={104} value={extra} disabled={off} />}</Cell>
            </React.Fragment>
          );
        })}
        <FormLabel htmlFor="main-video">Video/Audio</FormLabel>
        <Checks $gap={16}>
          <Check type="checkbox" id="main-video" defaultChecked disabled />
          <Check type="checkbox" aria-label="Main stream audio" defaultChecked />
        </Checks>
        <Checks $gap={18} $left={2}>
          <Check type="checkbox" aria-label="Extra stream video" defaultChecked />
          <Check type="checkbox" aria-label="Extra stream audio" />
        </Checks>
      </FormGrid>
      <ProfileRow>
        <ProfileLabel htmlFor="profile">Static configuration of</ProfileLabel>
        <Dropdown id="profile" width={117} value="main profile" />
      </ProfileRow>
      <Actions>
        {["Copy", "Paste", "Refresh", "OK", "Cancel"].map((t) => (
          <Action key={t}>{t}</Action>
        ))}
      </Actions>
    </DialogFrame>
  </Dialog>
);

const PtzPanel = () => (
  <PanelBody>
    <WheelBox>
      <Wheel />
    </WheelBox>
    <StepRow>
      <label htmlFor="step">Step(1-8):</label>
      <StackSelect>
        <StepSelect id="step" defaultValue="5">
          <option>5</option>
        </StepSelect>
        <Triangle w={9} h={8} color="#999" />
      </StackSelect>
    </StepRow>
    {["Zoom", "Focus", "Iris"].map((t) => (
      <LensRow key={t}>
        <IconButton aria-label={t + " in"}><RoundSign plus /></IconButton>
        <span>{t}</span>
        <IconButton aria-label={t + " out"}><RoundSign /></IconButton>
      </LensRow>
    ))}
    {[["Preset:", "preset", ["swap", "plus", "minus"]], ["Tour:", "tour", ["play", "stop", "grid"]]].map(([text, id, icons]) => (
      <div key={id}>
        <FieldLabel htmlFor={id}>{text}</FieldLabel>
        <FieldRow>
          <NumberBox id={id} type="text" defaultValue="1" />
          {icons.map((g) => (
            <SquareButton key={g} aria-label={id + " " + g}><Glyph name={g} /></SquareButton>
          ))}
        </FieldRow>
      </div>
    ))}
    <PictureTabs>
      <PictureTab $grow="67">Color</PictureTab>
      <PictureTab $grow="72" $divided>Other</PictureTab>
    </PictureTabs>
    <Sliders>
      {Object.keys(SliderIcons).map((name) => (
        <SliderRow key={name}>
          {SliderIcons[name]}
          <IconButton aria-label={name + " down"}><Triangle dir="left" w={10} h={13} color="#e3e5e9" /></IconButton>
          <Range type="range" min="0" max="100" defaultValue="0" aria-label={name} />
          <IconButton aria-label={name + " up"}><Triangle dir="right" w={10} h={13} color="#e3e5e9" /></IconButton>
        </SliderRow>
      ))}
    </Sliders>
    <DefaultButton>Default</DefaultButton>
  </PanelBody>
);

const BrowserChrome = () => (
  <Chrome>
    <Glass viewBox="0 0 1366 54" preserveAspectRatio="none" aria-hidden="true">
      <defs>
        <filter id="soft" x="-20%" y="-50%" width="140%" height="200%"><feGaussianBlur stdDeviation="3" /></filter>
      </defs>
      <g filter="url(#soft)">
        <path d="M155 8h670v50H155z" fill="#69a4e3" opacity=".75" />
        <path d="M170 14h390v14H170z" fill="#8db9e8" opacity=".6" />
        <path d="M160 40h640v20H160z" fill="#141a24" opacity=".9" />
        <path d="M20 13h20l10 12v30H20zM96 13h22l10 12v30H96z" fill="#fff" opacity=".9" />
        <path d="M830 22h330v40H830z" fill="#4b8ed2" opacity=".7" />
        <path d="M1068 8h28v24h-28z" fill="#dcebc9" opacity=".85" />
        <path d="M1292 14h30v40h-30z" fill="#d3e3cf" opacity=".8" />
        <path d="M162 22h14M184 22h84M275 22h6M290 22h150M453 22h22M487 22h66" stroke="#2f5a8c" strokeWidth="9" opacity=".75" />
      </g>
    </Glass>
    <ChromeRow>
      <NavRound $size={38} $m="0 0 0 1px" aria-label="Back"><BackIcon /></NavRound>
      <NavRound $size={26} $m="6px 0 0 3px" aria-label="Forward"><ForwardIcon /></NavRound>
      <AddressBar>
        <IeLogo />
        <AddressInput type="text" aria-label="Address" defaultValue="http://192.168.1.11/" />
        <ToolButton aria-label="Search">
          <svg width="13" height="13" viewBox="0 0 13 13"><circle cx="8" cy="5" r="3.800" fill="none" stroke="#4c545e" strokeWidth="1.700" /><path d="M5 8l-4 4.200" stroke="#4c545e" strokeWidth="2.200" /></svg>
        </ToolButton>
        <Triangle w={7} h={4} color="#5c646e" />
        <ToolButton aria-label="Compatibility View">
          <svg width="16" height="13" viewBox="0 0 16 13"><path d="M4.500 5.500V.6h5l2 2v3M4.500 8v4.400h7V8" fill="none" stroke="#5c646e" /><path d="M2.500 7l2.500-2 2 2 2-2 2 2 2-2M6 3.500h3M6 10.500l2-1.500 2 1.500" fill="none" stroke="#5c646e" /></svg>
        </ToolButton>
        <ToolButton aria-label="Refresh">
          <svg width="12" height="13" viewBox="0 0 12 13"><path d="M9.500 4A4.300 4.300 0 1 0 10.300 8" fill="none" stroke="#4c545e" strokeWidth="1.800" /><path d="M6.500 4.500h4.500V0z" fill="#4c545e" /></svg>
        </ToolButton>
      </AddressBar>
      <Tabs>
        {[0, 1, 2].map((i) => (
          <Tab key={i} $active={i === 2}>
            <IeLogo />
            <TabTitle>NETSurveillance WEB</TabTitle>
            {i === 2 && <Cross />}
          </Tab>
        ))}
        <NewTab aria-label="New tab" />
      </Tabs>
      <ChromeTools>
        <ToolButton aria-label="Home">
          <svg width="17" height="18" viewBox="0 0 17 18"><path d="M8.500 1.500 1 9h2.500v7.500H7V11h3v5.500h3.500V9H16l-3-3V2h-2v2z" fill="#fff" stroke="#5d6f83" strokeWidth=".8" /></svg>
        </ToolButton>
        <ToolButton aria-label="Favorites">
          <svg width="17" height="18" viewBox="0 0 17 18"><path d="M8.500 1l2.200 5.500 5.800.3-4.500 3.700 1.500 6-5-3.300-5 3.300 1.500-6L.5 6.800l5.800-.3z" fill="#fff" stroke="#41658e" strokeWidth=".7" /></svg>
        </ToolButton>
        <ToolButton aria-label="Tools">
          <svg width="17" height="18" viewBox="0 0 17 18"><circle cx="8.500" cy="9" r="6.300" fill="none" stroke="#fff" strokeWidth="2.800" strokeDasharray="2.700 2.250" /><circle cx="8.500" cy="9" r="4.300" fill="none" stroke="#fff" strokeWidth="2.400" /></svg>
        </ToolButton>
      </ChromeTools>
    </ChromeRow>
    <Caption>
      <CaptionButton $w={29} $first aria-label="Minimize">
        <svg width="12" height="12" viewBox="0 0 12 12"><path d="M.5 6.500h11v3.500H.5z" fill="#fff" stroke="#4a5c70" strokeWidth=".7" /></svg>
      </CaptionButton>
      <CaptionButton $w={27} aria-label="Restore">
        <svg width="12" height="12" viewBox="0 0 12 12"><path d="M3 1h8v8H3z" fill="none" stroke="#fff" strokeWidth="1.500" /><path d="M1 3h8v8H1z" fill="#47617d" stroke="#fff" strokeWidth="1.600" /><path d="M4 6h2v2H4z" fill="#fff" /></svg>
      </CaptionButton>
      <CaptionButton $w={46} aria-label="Close window"><Cross size={10} color="#fff" width={2} /></CaptionButton>
    </Caption>
  </Chrome>
);

export default function App() {
  const [noticeOpen, setNoticeOpen] = useState(true);
  return (
    <Screen>
      <GlobalStyle />
      <BrowserChrome />
      <Viewport>
        <Page>
          <MenuBar>
            {["Playback", "Log", "DeviceCfg", "LocalCfg", "Log Out"].map((t) => (
              <MenuItem key={t} href="#">{t}</MenuItem>
            ))}
          </MenuBar>
          <Columns>
            <Column $w={140}>
              <PanelCap />
              <PanelBody>
                <TreeRow $h={20} $gap={3} $left={5}>
                  <Wrench />
                  <DeviceName>NetSurveillance</DeviceName>
                </TreeRow>
                <TreeRow $h={30} $gap={8} $left={4}>
                  <IconButton aria-label="Stop"><CamStop /></IconButton>
                  <IconButton aria-label="Play main stream"><CamPlaySquare /></IconButton>
                  <IconButton aria-label="Play extra stream"><CamPlayRound /></IconButton>
                  <DeviceName>CAM01</DeviceName>
                </TreeRow>
              </PanelBody>
            </Column>
            <Column>
              <PanelCap />
              <VideoArea />
              <DeviceConfig />
            </Column>
            <Column $w={139}>
              <PanelCap />
              <PtzPanel />
            </Column>
            <QrColumn>
              {[["Serial ID", 77], ["Android", 4211], ["IOS", 90817]].map(([t, seed]) => (
                <QrFigure key={t}>
                  <QrCode seed={seed} label={t} />
                  <QrCaption>{t}</QrCaption>
                </QrFigure>
              ))}
              <Closing>Closing</Closing>
            </QrColumn>
          </Columns>
        </Page>
        <ScrollTrack $vertical>
          <ScrollButton aria-label="Scroll up"><Chevron w={12} h={11} d="M1 8.500l5-5.500 5 5.500" /></ScrollButton>
          <ScrollThumb $vertical />
          <ScrollButton aria-label="Scroll down"><Chevron w={12} h={11} d="M1 2.500l5 5.500 5-5.500" /></ScrollButton>
        </ScrollTrack>
        <ScrollTrack>
          <ScrollButton aria-label="Scroll left"><Chevron w={12} h={12} d="M8.500 1 3.500 6l5 5" /></ScrollButton>
          <ScrollThumb />
          <ScrollButton aria-label="Scroll right"><Chevron w={12} h={12} d="M3.500 1l5 5-5 5" /></ScrollButton>
        </ScrollTrack>
      </Viewport>
      <Taskbar>
        <Glass viewBox="0 0 1366 40" preserveAspectRatio="none" aria-hidden="true">
          <defs>
            <filter id="glow" x="-20%" y="-20%" width="140%" height="140%"><feGaussianBlur stdDeviation="1.500" /></filter>
          </defs>
          <path d="M500 40Q590 12 700 0H420q30 14 34 40z" fill="#fff" opacity=".09" filter="url(#glow)" />
          <path d="M900-4q50 16 78 50" fill="none" stroke="#a9d3f7" strokeWidth="6" opacity=".85" filter="url(#glow)" />
        </Glass>
        <StartButton aria-label="Start"><StartOrb /></StartButton>
        <TaskButtons>
          <TaskButton aria-label="Explorer"><ExplorerIcon /></TaskButton>
          <TaskButton aria-label="Command prompt"><ConsoleIcon /></TaskButton>
          <TaskButton aria-label="Control panel"><PanelIcon /></TaskButton>
          <TaskButton $w={54} $active aria-label="Program"><PageIcon /></TaskButton>
        </TaskButtons>
        <Tray>
          <Lang>EN</Lang>
          {trayIcons.map(([name, art]) => (
            <svg key={name} width="16" height="16" viewBox="0 0 16 16" role="img" aria-label={name}>{art}</svg>
          ))}
          <Clock>
            <div>13:38</div>
            <div>05.03.2018</div>
          </Clock>
          <ShowDesktop aria-label="Show desktop" />
        </Tray>
      </Taskbar>
      {noticeOpen && (
        <Notice role="alert">
          <NoticeStripe />
          <NoticeBody>
            <NoticeText>Ваши параметры безопасности подвергают этот компьютер риску.</NoticeText>
            <NoticeButton $w={162}>Исправить параметры</NoticeButton>
            <NoticeButton $w={102}>Параметры</NoticeButton>
            <NoticeClose aria-label="Close notice" onClick={() => setNoticeOpen(false)}><Cross /></NoticeClose>
          </NoticeBody>
        </Notice>
      )}
    </Screen>
  );
}
